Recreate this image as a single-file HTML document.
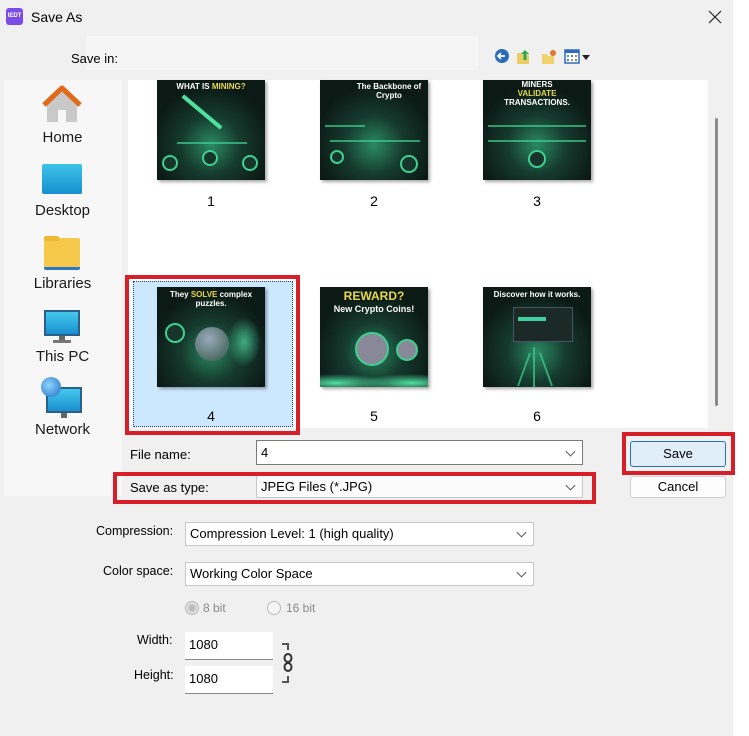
<!DOCTYPE html>
<html><head><meta charset="utf-8">
<style>
*{margin:0;padding:0;box-sizing:border-box}
body{width:749px;height:736px;background:#fff;font-family:"Liberation Sans",sans-serif;font-size:12px;color:#000;position:relative;overflow:hidden}
.a{position:absolute}
.win{left:0;top:0;width:733px;height:736px;background:#f0f0f0}
.thumb{position:absolute;width:108px;height:100px;background:radial-gradient(circle at 50% 65%,#2a8a62 0,#153a2e 35%,#0c1a16 70%);box-shadow:2px 2px 3px rgba(0,0,0,.35);overflow:hidden;color:#fff;font-weight:bold;font-size:8px;text-align:center;line-height:9px}
.thumb .y{color:#e8d84a}
.thumb .g{position:absolute;border-radius:50%;border:2px solid #3fcf90;background:#17352b}
.thumb .ln{position:absolute;height:2px;background:#3fcf90;opacity:.7}
.lbl{position:absolute;font-size:14px;width:108px;text-align:center}
.red{position:absolute;border:4px solid #d71f2a}
.inp{position:absolute;background:#fff;border:1px solid #c8c8c8;font-size:13px;padding-left:4px}
.chev{position:absolute;right:8px;top:50%;width:7px;height:7px;border-right:1px solid #555;border-bottom:1px solid #555;transform:translateY(-70%) rotate(45deg)}
.side{font-size:15px;color:#1a1a1a;width:117px;text-align:center;position:absolute;left:4px}
.fl{position:absolute;font-size:12.5px;text-align:right}
</style></head><body>
<div class="a win"></div>
<div class="a" style="left:6px;top:8px;width:17px;height:17px;background:#7a4de8;border-radius:3px;color:#fff;font-size:6px;font-weight:bold;line-height:17px;text-align:center">IEDT</div>
<div class="a" style="left:31px;top:9px;font-size:14px">Save As</div>
<svg class="a" style="left:708px;top:10px" width="14" height="14"><path d="M1 1L13 13M13 1L1 13" stroke="#222" stroke-width="1.2"/></svg>
<div class="a" style="left:86px;top:36px;width:392px;height:34px;background:#f5f5f5"></div>
<div class="a" style="left:71px;top:51px;font-size:13px">Save in:</div>
<svg class="a" style="left:494px;top:47px" width="100" height="18">
<circle cx="8" cy="9" r="7" fill="#2a6ab8"/><path d="M11 9H5M7 6L4 9L7 12" stroke="#fff" stroke-width="1.8" fill="none"/>
<path d="M23 6h5l1 2h6v9H23z" fill="#e9cd62"/><path d="M31 3l4 4h-2.5v6h-3v-6H27z" fill="#2da84a"/>
<path d="M48 7h5l1 2h6v8H48z" fill="#efd26b"/><circle cx="59" cy="6" r="3" fill="#e6742a"/>
<rect x="71" y="3" width="14" height="13" fill="#fff" stroke="#2f6ac0" stroke-width="1.5"/><rect x="71" y="3" width="14" height="3" fill="#2f6ac0"/>
<rect x="73" y="8" width="2" height="2" fill="#4a8"/><rect x="77" y="8" width="2" height="2" fill="#48c"/><rect x="81" y="8" width="2" height="2" fill="#c84"/><rect x="73" y="12" width="2" height="2" fill="#48c"/><rect x="77" y="12" width="2" height="2" fill="#c84"/><rect x="81" y="12" width="2" height="2" fill="#4a8"/>
<path d="M88 8h8l-4 5z" fill="#222"/>
</svg>
<div class="a" style="left:4px;top:80px;width:118px;height:416px;background:#f7f7f7"></div>
<svg class="a" style="left:41px;top:84px" width="42" height="42"><path d="M6 20L21 6L36 20V38H6z" fill="#c9c9c9"/><path d="M17 38V26h8v12z" fill="#f7f7f7"/><path d="M3 21L21 4L39 21" stroke="#e06a1a" stroke-width="5" fill="none" stroke-linejoin="round"/></svg>
<div class="side" style="top:129px">Home</div>
<div class="a" style="left:42px;top:164px;width:40px;height:30px;background:linear-gradient(#3cc3e8,#1890d0);border-radius:2px"></div>
<div class="side" style="top:202px">Desktop</div>
<div class="a" style="left:44px;top:238px;width:36px;height:32px;background:#f7c94a;border-radius:2px;border-bottom:3px solid #2a78c8"></div>
<div class="a" style="left:44px;top:236px;width:15px;height:5px;background:#f0b830;border-radius:2px 2px 0 0"></div>
<div class="side" style="top:275px">Libraries</div>
<div class="a" style="left:44px;top:310px;width:36px;height:26px;background:linear-gradient(#45c8ec,#1a8fd0);border:2px solid #2b5f8a"></div>
<div class="a" style="left:59px;top:336px;width:6px;height:5px;background:#666"></div>
<div class="a" style="left:53px;top:340px;width:18px;height:3px;background:#777"></div>
<div class="side" style="top:348px">This PC</div>
<div class="a" style="left:46px;top:387px;width:36px;height:26px;background:linear-gradient(#45c8ec,#1a8fd0);border:2px solid #2b5f8a"></div>
<div class="a" style="left:41px;top:377px;width:20px;height:20px;border-radius:50%;background:radial-gradient(circle at 40% 40%,#8fd3ff,#1d6fc0)"></div>
<div class="a" style="left:61px;top:413px;width:6px;height:5px;background:#666"></div>
<div class="side" style="top:421px">Network</div>
<div class="a" style="left:128px;top:80px;width:580px;height:348px;background:#fff"></div>
<div class="a" style="left:715px;top:118px;width:3px;height:288px;background:#8a8a8a;border-radius:2px"></div>
<div class="a" style="left:133px;top:281px;width:160px;height:146px;background:#cce8ff;border:1px dotted #1a4a8a"></div>

<div class="thumb" style="left:157px;top:80px"><div style="margin-top:2px">WHAT IS <span class="y">MINING?</span></div><div style="position:absolute;left:20px;top:30px;width:50px;height:4px;background:#4fe0a0;transform:rotate(40deg)"></div><div class="ln" style="left:20px;top:62px;width:70px"></div><div class="g" style="left:5px;top:75px;width:16px;height:16px"></div><div class="g" style="left:85px;top:75px;width:16px;height:16px"></div><div class="g" style="left:45px;top:70px;width:16px;height:16px"></div></div>
<div class="thumb" style="left:320px;top:80px"><div style="margin-top:2px;margin-left:30px">The Backbone of Crypto</div><div class="ln" style="left:5px;top:45px;width:40px"></div><div class="ln" style="left:10px;top:60px;width:90px"></div><div class="g" style="left:80px;top:75px;width:18px;height:18px"></div><div class="g" style="left:10px;top:70px;width:14px;height:14px"></div></div>
<div class="thumb" style="left:483px;top:80px"><div>MINERS<br><span class="y">VALIDATE</span><br>TRANSACTIONS.</div><div class="ln" style="left:5px;top:45px;width:98px"></div><div class="ln" style="left:5px;top:60px;width:98px"></div><div class="g" style="left:45px;top:70px;width:18px;height:18px"></div></div>
<div class="lbl" style="left:157px;top:193px">1</div>
<div class="lbl" style="left:320px;top:193px">2</div>
<div class="lbl" style="left:483px;top:193px">3</div>

<div class="thumb" style="left:157px;top:287px"><div style="margin-top:3px">They <span class="y">SOLVE</span> complex<br>puzzles.</div><div class="g" style="left:8px;top:36px;width:20px;height:20px"></div><div style="position:absolute;left:38px;top:40px;width:34px;height:34px;border-radius:50%;background:radial-gradient(circle at 40% 35%,#9ab,#354)"></div><div style="position:absolute;left:70px;top:30px;width:34px;height:50px;border-radius:50%;background:radial-gradient(#3fae80,transparent 70%)"></div></div>
<div class="thumb" style="left:320px;top:287px"><div style="margin-top:3px;font-size:12px;line-height:12px"><span class="y">REWARD?</span><br><span style="font-size:9px">New Crypto Coins!</span></div><div class="g" style="left:35px;top:45px;width:34px;height:34px;background:#889"></div><div class="g" style="left:76px;top:52px;width:22px;height:22px;background:#889"></div><div style="position:absolute;left:0;top:80px;width:108px;height:20px;background:radial-gradient(ellipse at 15% 80%,#4fe0a0,transparent 40%),radial-gradient(ellipse at 85% 80%,#4fe0a0,transparent 40%)"></div></div>
<div class="thumb" style="left:483px;top:287px"><div style="margin-top:3px">Discover how it works.</div><div style="position:absolute;left:30px;top:20px;width:60px;height:35px;background:#1b2a26;border:1px solid #456"></div><div style="position:absolute;left:35px;top:30px;width:28px;height:4px;background:#3fd0a0"></div><div class="ln" style="left:50px;top:60px;width:2px;height:40px"></div><div class="ln" style="left:40px;top:65px;width:2px;height:35px;transform:rotate(20deg)"></div><div class="ln" style="left:62px;top:65px;width:2px;height:35px;transform:rotate(-20deg)"></div></div>
<div class="lbl" style="left:157px;top:408px">4</div>
<div class="lbl" style="left:320px;top:408px">5</div>
<div class="lbl" style="left:483px;top:408px">6</div>
<div class="red" style="left:125px;top:275px;width:175px;height:160px"></div>

<div class="fl" style="left:130px;top:447px;font-size:13px">File name:</div>
<div class="inp" style="left:256px;top:440px;width:327px;height:25px;border-color:#7a7a7a;line-height:23px">4<span class="chev"></span></div>
<div class="fl" style="left:130px;top:480px;font-size:13px">Save as type:</div>
<div class="inp" style="left:256px;top:475px;width:327px;height:23px;line-height:21px;background:#fbfbfb">JPEG Files (*.JPG)<span class="chev"></span></div>
<div class="red" style="left:113px;top:472px;width:483px;height:32px"></div>
<div class="a" style="left:630px;top:441px;width:96px;height:26px;background:#e0eefa;border:1px solid #2a70c0;border-radius:3px;text-align:center;line-height:24px;font-size:13px">Save</div>
<div class="red" style="left:622px;top:432px;width:113px;height:43px"></div>
<div class="a" style="left:630px;top:476px;width:96px;height:22px;background:#fdfdfd;border:1px solid #d0d0d0;border-radius:3px;text-align:center;line-height:20px;font-size:13px">Cancel</div>

<div class="fl" style="left:96px;top:524px">Compression:</div>
<div class="inp" style="left:185px;top:522px;width:349px;height:24px;line-height:22px">Compression Level: 1 (high quality)<span class="chev"></span></div>
<div class="fl" style="left:103px;top:564px">Color space:</div>
<div class="inp" style="left:185px;top:562px;width:349px;height:24px;line-height:22px">Working Color Space<span class="chev"></span></div>
<div class="a" style="left:185px;top:601px;width:14px;height:14px;border-radius:50%;border:1px solid #bbb;background:radial-gradient(circle,#bbb 3px,#ddd 4px)"></div>
<div class="a" style="left:203px;top:601px;color:#8a8a8a">8 bit</div>
<div class="a" style="left:267px;top:601px;width:14px;height:14px;border-radius:50%;border:1px solid #bbb;background:#f5f5f5"></div>
<div class="a" style="left:286px;top:601px;color:#8a8a8a">16 bit</div>
<div class="fl" style="left:137px;top:633px">Width:</div>
<div class="inp" style="left:185px;top:632px;width:88px;height:28px;border:none;border-bottom:1px solid #888;line-height:26px">1080</div>
<div class="fl" style="left:134px;top:668px">Height:</div>
<div class="inp" style="left:185px;top:666px;width:88px;height:28px;border:none;border-bottom:1px solid #888;line-height:26px">1080</div>
<svg class="a" style="left:280px;top:642px" width="16" height="42"><path d="M2 2h6v6M2 40h6v-6" stroke="#555" stroke-width="2" fill="none"/><ellipse cx="8" cy="16" rx="3.5" ry="4" stroke="#333" stroke-width="2" fill="none"/><ellipse cx="8" cy="25" rx="3.5" ry="4" stroke="#333" stroke-width="2" fill="none"/></svg>
</body></html>
